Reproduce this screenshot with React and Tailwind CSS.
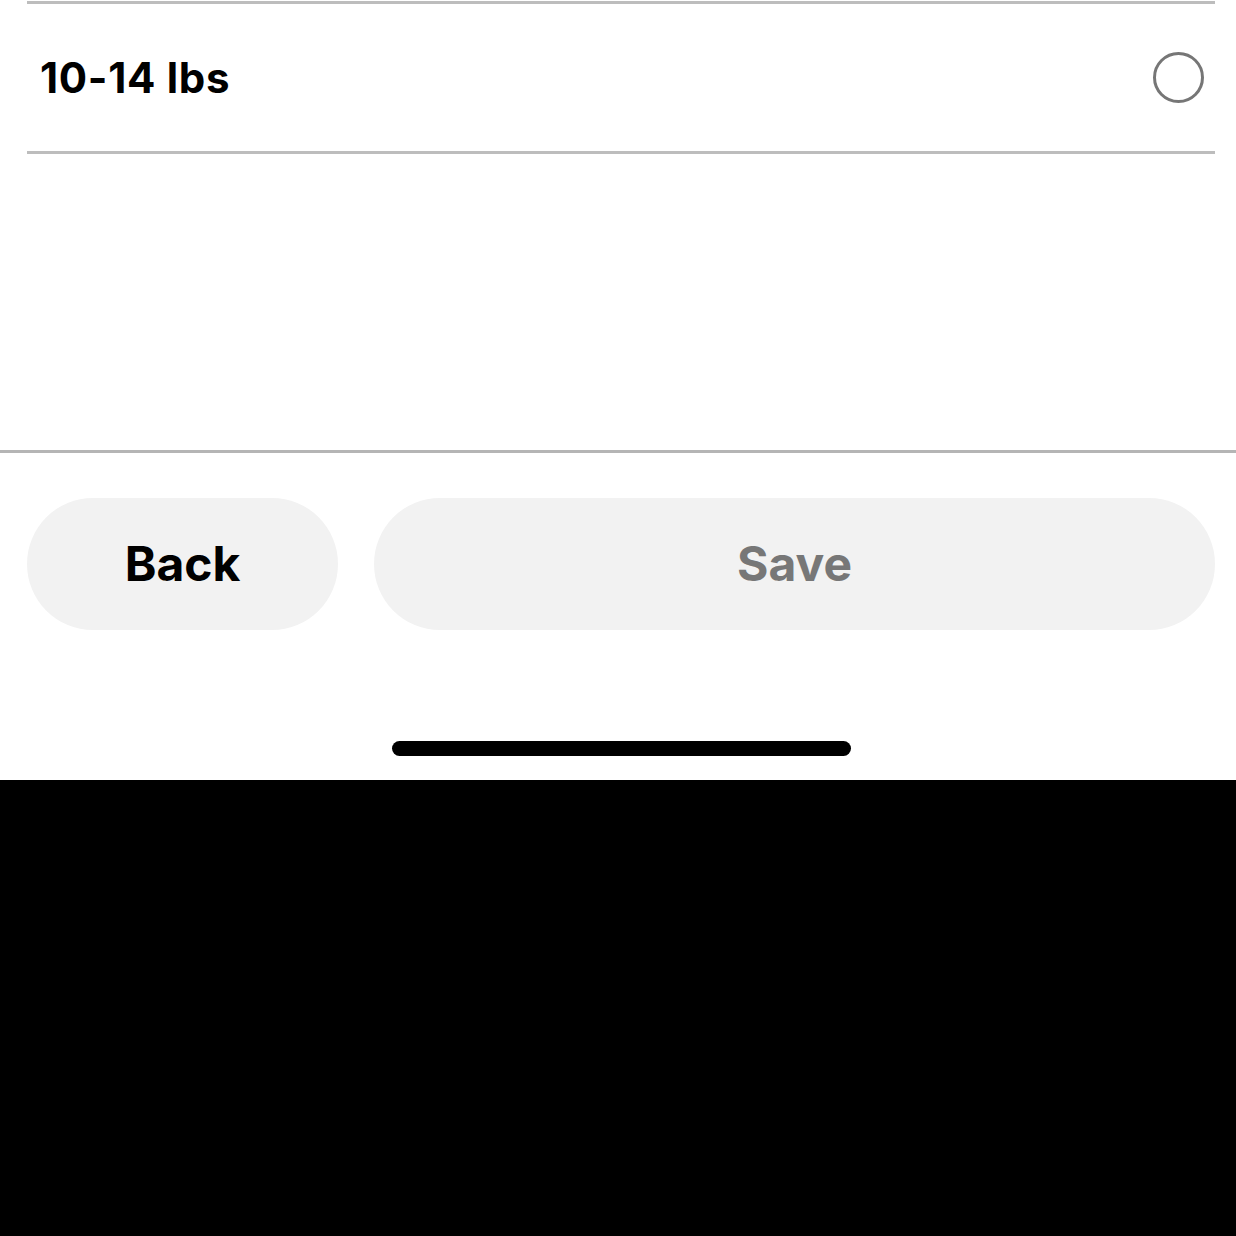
export default function App() {
  return (
    <div className="flex h-[1236px] w-full flex-col bg-black" style={{ fontFamily: "Inter, 'Noto Sans', sans-serif" }}>
      <div className="flex h-[780px] flex-col bg-white">
        <div className="pl-[27px] pr-[21px] pt-[1px]">
          <div className="flex h-[153px] items-center justify-between border-y-[3px] border-[#bdbdbd] pl-[13px] pr-[11px]">
            <p className="text-[42px] font-bold leading-none tracking-[0.7px] text-black">10-14 lbs</p>
            <span className="h-[51px] w-[51px] rounded-full border-[3px] border-[#767676]" />
          </div>
        </div>
        <div className="flex-1" />
        <div className="h-[330px] border-t-[3px] border-[#b5b5b5]">
          <div className="flex gap-[36px] pl-[27px] pr-[21px] pt-[45px]">
            <button className="flex h-[132px] w-[311px] items-center justify-center rounded-full bg-[#f2f2f2] text-[48px] font-bold text-black">
              Back
            </button>
            <button className="flex h-[132px] flex-1 items-center justify-center rounded-full bg-[#f2f2f2] text-[48px] font-bold text-[#777777]">
              Save
            </button>
          </div>
          <div className="ml-[392px] mt-[111px] h-[15px] w-[459px] rounded-full bg-black" />
        </div>
      </div>
    </div>
  );
}
